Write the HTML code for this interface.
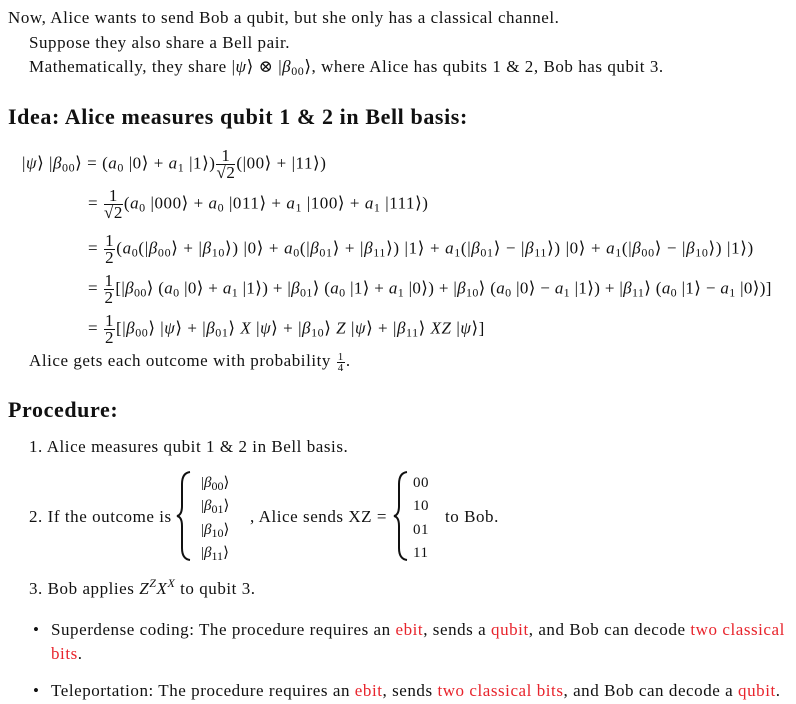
<!DOCTYPE html>
<html><head><meta charset="utf-8"><style>
body{margin:0;width:796px;height:704px;background:#fff;font-family:"Liberation Serif","DejaVu Serif",serif;font-size:17px;letter-spacing:0.55px;color:#111;position:relative;overflow:hidden}
.l{position:absolute;white-space:nowrap;line-height:20px}
h2{position:absolute;margin:0;font-size:22px;letter-spacing:0.6px;font-weight:bold;white-space:nowrap;line-height:24px}
i{font-style:italic}
sub{font-size:12px;vertical-align:-3px;line-height:0}
sup{font-size:12px;vertical-align:7px;line-height:0}
.fr{display:inline-block;vertical-align:middle;text-align:center;line-height:16px;margin:0 1px}
.fr span{display:block}
.fr .n{border-bottom:1px solid #111;padding:0 1px}
.r{color:#e8242c}
</style></head><body>
<div class="l" style="left:8px;top:8px">Now, Alice wants to send Bob a qubit, but she only has a classical channel.</div>
<div class="l" style="left:29px;top:33px">Suppose they also share a Bell pair.</div>
<div class="l" style="left:29px;top:57px">Mathematically, they share |<i>ψ</i>⟩ ⊗ |<i>β</i><sub>00</sub>⟩, where Alice has qubits 1 &amp; 2, Bob has qubit 3.</div>
<h2 style="left:8px;top:105px">Idea: Alice measures qubit 1 &amp; 2 in Bell basis:</h2>

<div class="l" style="left:22px;top:148px">|<i>ψ</i>⟩ |<i>β</i><sub>00</sub>⟩ = (<i>a</i><sub>0</sub> |0⟩ + <i>a</i><sub>1</sub> |1⟩)<span class="fr"><span class="n">1</span><span>√2</span></span>(|00⟩ + |11⟩)</div>
<div class="l" style="left:88px;top:188px">= <span class="fr"><span class="n">1</span><span>√2</span></span>(<i>a</i><sub>0</sub> |000⟩ + <i>a</i><sub>0</sub> |011⟩ + <i>a</i><sub>1</sub> |100⟩ + <i>a</i><sub>1</sub> |111⟩)</div>
<div class="l" style="left:88px;top:233px;letter-spacing:0.65px">= <span class="fr"><span class="n">1</span><span>2</span></span>(<i>a</i><sub>0</sub>(|<i>β</i><sub>00</sub>⟩ + |<i>β</i><sub>10</sub>⟩) |0⟩ + <i>a</i><sub>0</sub>(|<i>β</i><sub>01</sub>⟩ + |<i>β</i><sub>11</sub>⟩) |1⟩ + <i>a</i><sub>1</sub>(|<i>β</i><sub>01</sub>⟩ − |<i>β</i><sub>11</sub>⟩) |0⟩ + <i>a</i><sub>1</sub>(|<i>β</i><sub>00</sub>⟩ − |<i>β</i><sub>10</sub>⟩) |1⟩)</div>
<div class="l" style="left:88px;top:273px;letter-spacing:0.35px">= <span class="fr"><span class="n">1</span><span>2</span></span>[|<i>β</i><sub>00</sub>⟩ (<i>a</i><sub>0</sub> |0⟩ + <i>a</i><sub>1</sub> |1⟩) + |<i>β</i><sub>01</sub>⟩ (<i>a</i><sub>0</sub> |1⟩ + <i>a</i><sub>1</sub> |0⟩) + |<i>β</i><sub>10</sub>⟩ (<i>a</i><sub>0</sub> |0⟩ − <i>a</i><sub>1</sub> |1⟩) + |<i>β</i><sub>11</sub>⟩ (<i>a</i><sub>0</sub> |1⟩ − <i>a</i><sub>1</sub> |0⟩)]</div>
<div class="l" style="left:88px;top:313px">= <span class="fr"><span class="n">1</span><span>2</span></span>[|<i>β</i><sub>00</sub>⟩ |<i>ψ</i>⟩ + |<i>β</i><sub>01</sub>⟩ <i>X</i> |<i>ψ</i>⟩ + |<i>β</i><sub>10</sub>⟩ <i>Z</i> |<i>ψ</i>⟩ + |<i>β</i><sub>11</sub>⟩ <i>XZ</i> |<i>ψ</i>⟩]</div>
<div class="l" style="left:29px;top:351px">Alice gets each outcome with probability <span class="fr" style="font-size:11px;line-height:10px"><span class="n">1</span><span>4</span></span>.</div>

<h2 style="left:8px;top:398px">Procedure:</h2>
<div class="l" style="left:29px;top:437px">1. Alice measures qubit 1 &amp; 2 in Bell basis.</div>
<div class="l" style="left:29px;top:507px">2. If the outcome is</div>
<svg style="position:absolute;left:174px;top:470px" width="20" height="92"><path d="M16 2 Q8 3 8 14 L8 36 Q8 45 3 46 Q8 47 8 56 L8 78 Q8 89 16 90" fill="none" stroke="#111" stroke-width="2"/></svg>
<div class="l" style="left:201px;top:473px;font-size:15px;letter-spacing:0">|<i>β</i><sub>00</sub>⟩</div>
<div class="l" style="left:201px;top:496px;font-size:15px;letter-spacing:0">|<i>β</i><sub>01</sub>⟩</div>
<div class="l" style="left:201px;top:520px;font-size:15px;letter-spacing:0">|<i>β</i><sub>10</sub>⟩</div>
<div class="l" style="left:201px;top:543px;font-size:15px;letter-spacing:0">|<i>β</i><sub>11</sub>⟩</div>
<div class="l" style="left:250px;top:507px">, Alice sends XZ =</div>
<svg style="position:absolute;left:391px;top:470px" width="20" height="92"><path d="M16 2 Q8 3 8 14 L8 36 Q8 45 3 46 Q8 47 8 56 L8 78 Q8 89 16 90" fill="none" stroke="#111" stroke-width="2"/></svg>
<div class="l" style="left:413px;top:473px;font-size:15px">00</div>
<div class="l" style="left:413px;top:496px;font-size:15px">10</div>
<div class="l" style="left:413px;top:520px;font-size:15px">01</div>
<div class="l" style="left:413px;top:543px;font-size:15px">11</div>
<div class="l" style="left:445px;top:507px">to Bob.</div>
<div class="l" style="left:29px;top:579px">3. Bob applies <i>Z</i><sup><i>Z</i></sup><i>X</i><sup><i>X</i></sup> to qubit 3.</div>

<div class="l" style="left:33px;top:620px">•</div>
<div class="l" style="left:51px;top:620px">Superdense coding: The procedure requires an <span class="r">ebit</span>, sends a <span class="r">qubit</span>, and Bob can decode <span class="r">two classical</span></div>
<div class="l" style="left:51px;top:644px"><span class="r">bits</span>.</div>
<div class="l" style="left:33px;top:681px">•</div>
<div class="l" style="left:51px;top:681px">Teleportation: The procedure requires an <span class="r">ebit</span>, sends <span class="r">two classical bits</span>, and Bob can decode a <span class="r">qubit</span>.</div>
</body></html>
